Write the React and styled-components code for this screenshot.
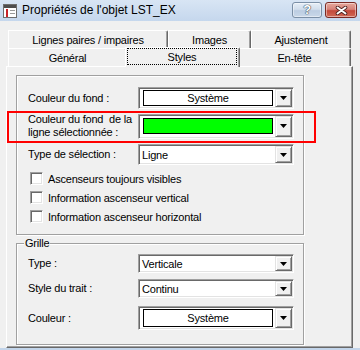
import React from "react";
import styled, { createGlobalStyle } from "styled-components";

const GlobalStyle = createGlobalStyle`
  html, body {
    margin: 0;
    padding: 0;
    background: #f0f0f0;
  }
  body {
    font-family: "Liberation Sans", Arial, sans-serif;
    font-size: 11px;
    letter-spacing: -0.2px;
    color: #000;
  }
`;

const Window = styled.div`
  box-sizing: border-box;
  width: 360px;
  height: 350px;
  overflow: hidden;
  background: #f0f0f0;
  border-bottom: 2px solid #c3d5ea;
  display: flex;
  flex-direction: column;
`;

const TitleBar = styled.div`
  flex: none;
  height: 21px;
  display: flex;
  align-items: center;
  padding: 0 3px;
  background: linear-gradient(#d8e5f4, #c5d7ed);
`;

const Title = styled.span`
  margin-left: 5px;
  font-size: 12px;
  letter-spacing: 0;
  line-height: 21px;
  white-space: nowrap;
`;

const Caption = styled.div`
  margin-left: auto;
  align-self: flex-start;
  margin-top: 2px;
  display: flex;
  gap: 3px;
`;

const CaptionButton = styled.div`
  box-sizing: border-box;
  width: ${(p) => p.$w}px;
  height: 16px;
  border: 1px solid ${(p) => (p.$close ? "#7a2a24" : "#7b8fa6")};
  border-radius: 3px;
  background: ${(p) =>
    p.$close
      ? "linear-gradient(#e6a99c, #d6837a 45%, #c4493a 55%, #d06a57)"
      : "linear-gradient(#e6eef7, #d2deec 45%, #bccde2 55%, #c9d8e9)"};
  box-shadow: inset 0 0 0 1px rgba(255, 255, 255, 0.45);
  display: flex;
  align-items: center;
  justify-content: center;
`;

const HelpGlyph = styled.span`
  font-weight: bold;
  font-size: 13px;
  line-height: 14px;
  color: #fff;
  text-shadow: 0 0 1px #3c4a5c, 0 0 1px #3c4a5c, 0 0 1px #3c4a5c;
`;

const Body = styled.div`
  flex: 1;
  padding: 9px 0 0 6px;
  display: flex;
  flex-direction: column;
`;

const TabStrip = styled.div`
  position: relative;
  z-index: 2;
  padding-left: 2px;
  display: flex;
  flex-direction: column;
`;

const TabRow = styled.div`
  display: flex;
  align-items: flex-end;
  height: 18px;
`;

const Tab = styled.div`
  box-sizing: border-box;
  flex: none;
  position: relative;
  z-index: ${(p) => (p.$active ? 3 : 1)};
  width: ${(p) => (p.$active ? p.$w + 4 : p.$w)}px;
  height: ${(p) => (p.$active ? 20 : 18)}px;
  margin: 0 ${(p) => (p.$active ? -2 : 0)}px ${(p) => (p.$active ? -1 : 0)}px;
  display: flex;
  align-items: ${(p) => (p.$active ? "flex-start" : "center")};
  justify-content: center;
  background: #f0f0f0;
  border-top: 1px solid #fff;
  border-left: 1px solid #fff;
  border-right: 1px solid #696969;
  border-top-right-radius: 2px;
  box-shadow: inset -1px 0 #a0a0a0;
  white-space: nowrap;
`;

const Focus = styled.span`
  box-sizing: border-box;
  flex: 1;
  height: 17px;
  margin: 0 2px 0 1px;
  border: 1px dotted #000;
  display: flex;
  align-items: center;
  justify-content: center;
`;

const Panel = styled.div`
  position: relative;
  z-index: 1;
  box-sizing: border-box;
  width: 347px;
  height: 282px;
  border-top: 1px solid #fff;
  border-left: 1px solid #fff;
  border-right: 1px solid #696969;
  border-bottom: 1px solid #696969;
  box-shadow: inset -1px -1px #a0a0a0;
  padding: 8px 0 0 9px;
  display: flex;
  flex-direction: column;
  gap: 8px;
`;

const Group = styled.div`
  position: relative;
  box-sizing: border-box;
  width: 288px;
  border: 1px solid #a0a0a0;
  box-shadow: inset 1px 1px #fff, 1px 1px #fff;
  padding: ${(p) => p.$pad};
  display: flex;
  flex-direction: column;
`;

const Legend = styled.span`
  position: absolute;
  top: -7px;
  left: 7px;
  padding: 0 1px;
  line-height: 13px;
  background: #f0f0f0;
`;

const Row = styled.div`
  display: flex;
  align-items: center;
  margin-top: ${(p) => p.$mt || 0}px;
`;

const Label = styled.div`
  flex: none;
  width: 110px;
  line-height: 13px;
  white-space: nowrap;
`;

const ComboBox = styled.div`
  box-sizing: border-box;
  flex: none;
  width: 156px;
  height: ${(p) => p.$h}px;
  padding: 1px;
  display: flex;
  background: #fff;
  border-top: 1px solid #a0a0a0;
  border-left: 1px solid #a0a0a0;
  border-bottom: 1px solid #fff;
  border-right: 1px solid #fff;
  box-shadow: inset 1px 1px #696969, inset -1px -1px #e3e3e3;
`;

const Field = styled.div`
  flex: 1;
  display: flex;
  align-items: center;
  padding-left: 2px;
  white-space: nowrap;
`;

const Swatch = styled.div`
  box-sizing: border-box;
  flex: 1;
  height: ${(p) => p.$h}px;
  margin: 0 2px 0 1px;
  border: 1px solid #000;
  background: ${(p) => p.$bg};
  display: flex;
  align-items: center;
  justify-content: center;
`;

const DropButton = styled.div`
  box-sizing: border-box;
  flex: none;
  width: 17px;
  background: #f0f0f0;
  border-top: 1px solid #e3e3e3;
  border-left: 1px solid #e3e3e3;
  border-right: 1px solid #696969;
  border-bottom: 1px solid #696969;
  box-shadow: inset 1px 1px #fff, inset -1px -1px #a0a0a0;
  display: flex;
  align-items: center;
  justify-content: center;
`;

const CheckList = styled.div`
  display: flex;
  flex-direction: column;
  gap: 6px;
  margin-top: 7px;
  padding-left: 2px;
`;

const CheckRow = styled.div`
  display: flex;
  align-items: center;
  gap: 5px;
  height: 13px;
  white-space: nowrap;
`;

const CheckBox = styled.span`
  box-sizing: border-box;
  flex: none;
  width: 13px;
  height: 13px;
  background: #fff;
  border-top: 1px solid #a0a0a0;
  border-left: 1px solid #a0a0a0;
  border-bottom: 1px solid #fff;
  border-right: 1px solid #fff;
  box-shadow: inset 1px 1px #696969, inset -1px -1px #e3e3e3;
`;

const Highlight = styled.div`
  position: absolute;
  left: 0;
  top: 44px;
  width: 309px;
  height: 32px;
  box-sizing: border-box;
  border: 2px solid #ff0000;
  pointer-events: none;
`;

const WindowIcon = () => (
  <svg width="14" height="14" viewBox="0 0 14 14">
    <rect x="0.5" y="0.5" width="13" height="13" fill="#fff" stroke="#6e6e6e" />
    <rect x="1" y="1" width="12" height="3" fill="#4d4d4d" />
    <rect x="3" y="5" width="2" height="8" fill="#c8242a" />
    <rect x="7" y="6" width="5" height="1" fill="#9a9a9a" />
    <rect x="7" y="9" width="5" height="1" fill="#9a9a9a" />
  </svg>
);

const CloseGlyph = () => (
  <svg width="13" height="9" viewBox="0 0 13 9">
    <path d="M2.5 1.5 L10.5 7.5 M10.5 1.5 L2.5 7.5" stroke="#4a1f1c" strokeWidth="3.6" strokeLinecap="round" />
    <path d="M2.5 1.5 L10.5 7.5 M10.5 1.5 L2.5 7.5" stroke="#fff" strokeWidth="2" strokeLinecap="round" />
  </svg>
);

const Arrow = () => (
  <svg width="7" height="4" viewBox="0 0 7 4">
    <polygon points="0,0 7,0 3.5,4" fill="#000" />
  </svg>
);

function Combo({ h, swatch, swatchH, children }) {
  return (
    <ComboBox $h={h}>
      <Field>
        {swatch ? (
          <Swatch $bg={swatch} $h={swatchH}>
            {children}
          </Swatch>
        ) : (
          children
        )}
      </Field>
      <DropButton>
        <Arrow />
      </DropButton>
    </ComboBox>
  );
}

const backTabs = [
  { label: "Lignes paires / impaires", w: 160 },
  { label: "Images", w: 83 },
  { label: "Ajustement", w: 100 },
];

const frontTabs = [
  { label: "Général", w: 119 },
  { label: "Styles", w: 111, active: true },
  { label: "En-tête", w: 113 },
];

const checks = [
  "Ascenseurs toujours visibles",
  "Information ascenseur vertical",
  "Information ascenseur horizontal",
];

export default function App() {
  return (
    <>
      <GlobalStyle />
      <Window>
        <TitleBar>
          <WindowIcon />
          <Title>Propriétés de l'objet LST_EX</Title>
          <Caption>
            <CaptionButton $w={30}>
              <HelpGlyph>?</HelpGlyph>
            </CaptionButton>
            <CaptionButton $w={32} $close>
              <CloseGlyph />
            </CaptionButton>
          </Caption>
        </TitleBar>

        <Body>
          <TabStrip>
            <TabRow>
              {backTabs.map((t) => (
                <Tab key={t.label} $w={t.w}>
                  {t.label}
                </Tab>
              ))}
            </TabRow>
            <TabRow>
              {frontTabs.map((t) => (
                <Tab key={t.label} $w={t.w} $active={t.active}>
                  {t.active ? <Focus>{t.label}</Focus> : t.label}
                </Tab>
              ))}
            </TabRow>
          </TabStrip>

          <Panel>
            <Group $pad="11px 0 11px 11px">
              <Row>
                <Label>Couleur du fond :</Label>
                <Combo h={22} swatch="#fff" swatchH={16}>
                  Système
                </Combo>
              </Row>
              <Row $mt={4}>
                <Label>
                  Couleur du fond{"\u00a0"} de la
                  <br />
                  ligne sélectionnée :
                </Label>
                <Combo h={25} swatch="#00ff00" swatchH={16} />
              </Row>
              <Row $mt={5}>
                <Label>Type de sélection :</Label>
                <Combo h={21}>Ligne</Combo>
              </Row>
              <CheckList>
                {checks.map((c) => (
                  <CheckRow key={c}>
                    <CheckBox />
                    {c}
                  </CheckRow>
                ))}
              </CheckList>
            </Group>

            <Group $pad="10px 0 14px 11px">
              <Legend>Grille</Legend>
              <Row>
                <Label>Type :</Label>
                <Combo h={19}>Verticale</Combo>
              </Row>
              <Row $mt={6}>
                <Label>Style du trait :</Label>
                <Combo h={19}>Continu</Combo>
              </Row>
              <Row $mt={8}>
                <Label>Couleur :</Label>
                <Combo h={24} swatch="#fff" swatchH={18}>
                  Système
                </Combo>
              </Row>
            </Group>

            <Highlight />
          </Panel>
        </Body>
      </Window>
    </>
  );
}
